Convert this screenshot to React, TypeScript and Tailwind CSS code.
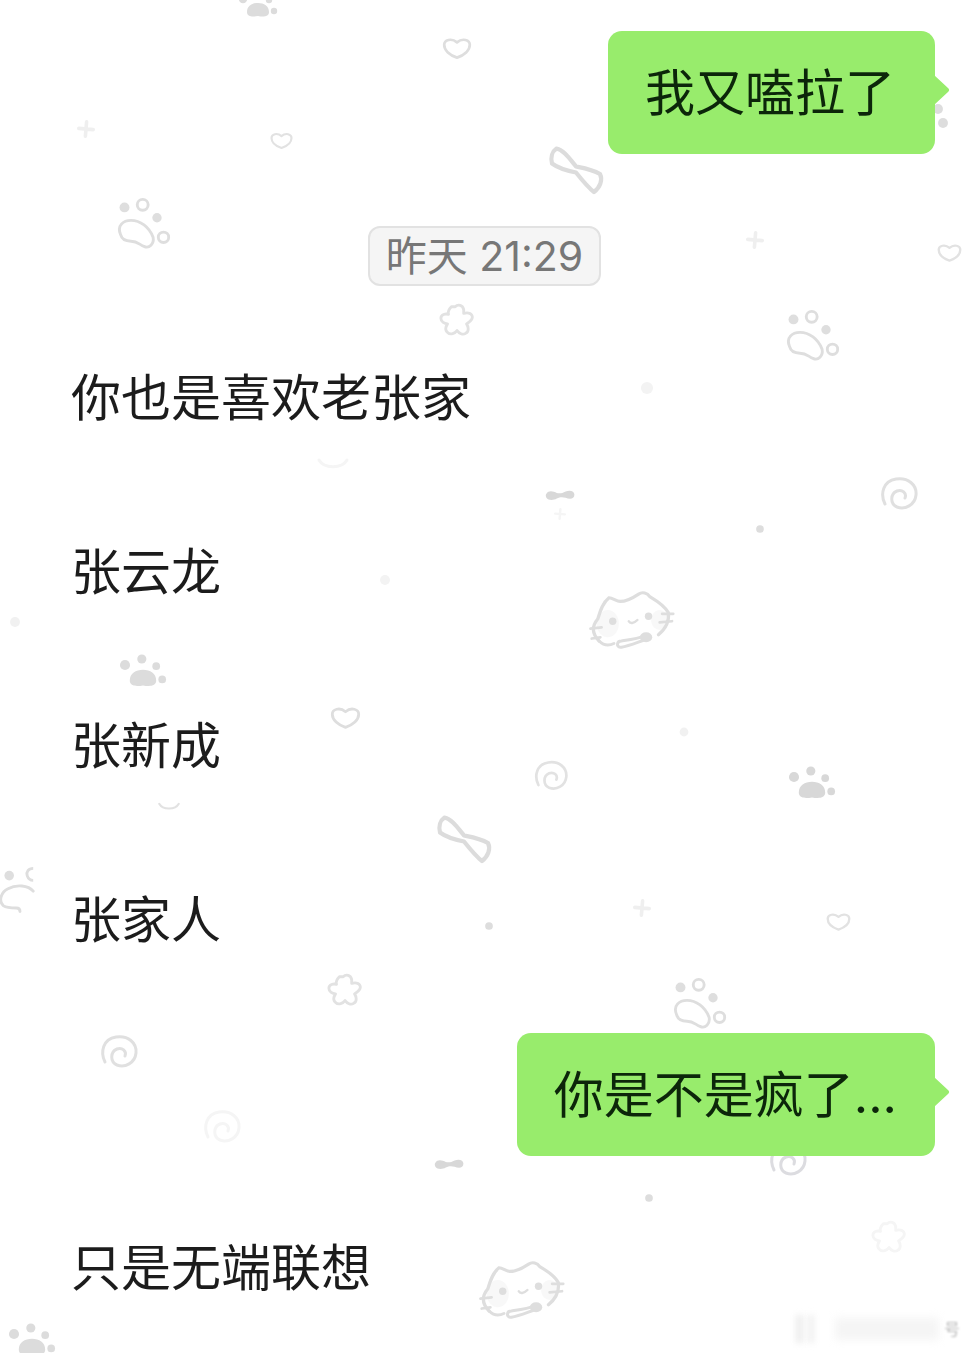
import React from 'react';

type DoodleKind = 'heart' | 'plus' | 'bow' | 'bone' | 'spiral' | 'flower' | 'smile' | 'dot' | 'pawLine' | 'pawCut' | 'pawSolid' | 'cat';

const Shape: React.FC<{ kind: DoodleKind }> = ({ kind }) => {
  switch (kind) {
    case 'heart':
      return <path d="M20 32C11 29 4 23 4 16c0-6 9-9 16-3 7-6 16-3 16 3 0 7-7 13-16 16z" fill="none" stroke="currentColor" strokeWidth="3.4" strokeLinejoin="round" />;
    case 'plus':
      return <path d="M21 8l-2 24M8 19l24 2" fill="none" stroke="currentColor" strokeWidth="6" strokeLinecap="round" />;
    case 'bow':
      return <path d="M7 5C12 6 16 12 20 17 25 18 31 19 36 22 38 26 36 31 32 34 28 31 24 26 20 21 15 20 8 18 4 15 3 11 4 7 7 5z" fill="none" stroke="currentColor" strokeWidth="2.8" strokeLinejoin="round" />;
    case 'bone':
      return <path d="M3 16c3-5 9-3 13-1 4 1 7 0 11-2 5-2 11-1 11 4 0 6-6 6-11 4-4-1-7-1-11 1-5 3-11 2-13-1-1-2-1-4 0-5z" fill="currentColor" />;
    case 'spiral':
      return <path d="M6 30C1 20 4 7 17 5 29 3 38 11 37 21 36 31 26 36 18 33 11 30 11 20 18 17 23 15 28 19 26 24" fill="none" stroke="currentColor" strokeWidth="3" strokeLinecap="round" />;
    case 'flower':
      return <path d="M17 5c3-3 8-2 9 3 0 2 0 3 0 4 3-1 8-1 9 3 1 4-3 6-6 8 2 3 3 8-1 10-3 2-7 0-9-3-2 3-7 5-10 2-3-2-2-6 0-9-3 0-7-2-7-6 0-4 5-5 8-4-1-3 1-6 3-8z" fill="none" stroke="currentColor" strokeWidth="3" strokeLinejoin="round" />;
    case 'smile':
      return <path d="M6 14c5 9 23 9 28 0" fill="none" stroke="currentColor" strokeWidth="3" strokeLinecap="round" />;
    case 'dot':
      return <circle cx="20" cy="20" r="11" fill="currentColor" />;
    case 'pawLine':
      return (
        <g>
          <path d="M2 29C-1 22 4 18 10 18 17 18 24 23 27 31 28 36 24 40 20 38 17 37 15 34 10 34 6 34 3 33 2 29z" fill="#fff" stroke="currentColor" strokeWidth="2.2" />
          <circle cx="5" cy="8" r="3.8" fill="currentColor" />
          <circle cx="19" cy="6" r="4.2" fill="#fff" stroke="currentColor" strokeWidth="2.2" />
          <circle cx="30" cy="16" r="3.6" fill="currentColor" />
          <circle cx="35" cy="31" r="4" fill="#fff" stroke="currentColor" strokeWidth="2.2" />
        </g>
      );
    case 'pawCut':
      return (
        <g>
          <circle cx="11" cy="8" r="4" fill="currentColor" />
          <path d="M31 2c-4 0-6 3-5 6 1 3 3 4 5 4" fill="none" stroke="currentColor" strokeWidth="2.4" />
          <path d="M31 21c-4-5-14-6-21-2-6 3-8 10-4 14 3 2 7 2 11 2 2 0 3 1 3 3" fill="none" stroke="currentColor" strokeWidth="2.4" strokeLinecap="round" />
        </g>
      );
    case 'pawSolid':
      return (
        <g fill="currentColor">
          <path d="M9 28c0-6 5-9 11-9s11 3 11 9c0 5-6 5-11 4-5 1-11 1-11-4z" />
          <circle cx="5" cy="15" r="4.2" />
          <circle cx="19" cy="10" r="3.8" />
          <circle cx="31" cy="16" r="3.2" />
          <circle cx="36" cy="27" r="3.2" />
        </g>
      );
    case 'cat':
      return (
        <g>
          <ellipse cx="16" cy="30" rx="9" ry="11" fill="currentColor" opacity="0.22" />
          <ellipse cx="58" cy="27" rx="7" ry="8" fill="currentColor" opacity="0.22" />
          <path d="M9 44C3 38 3 32 8 26 10 19 12 13 17 9 20 9 23 12 26 12 32 12 38 8 41 6 44 4 48 5 50 8 55 11 62 15 65 21 66 28 63 34 57 39" fill="none" stroke="currentColor" strokeWidth="2.6" strokeLinecap="round" />
          <path d="M9 44C13 48 17 48 21 46M26 49C23 49 23 44 27 44 33 43 40 42 46 40M27 49C33 48 40 45 46 43" fill="none" stroke="currentColor" strokeWidth="2.4" strokeLinecap="round" />
          <ellipse cx="47" cy="41" rx="5" ry="4" fill="currentColor" />
          <path d="M60 22h9M58 29l10-1M2 34l9-1M3 42l7-1" fill="none" stroke="currentColor" strokeWidth="2.2" strokeLinecap="round" />
          <circle cx="20" cy="28" r="3" fill="currentColor" />
          <circle cx="49" cy="24" r="3" fill="currentColor" />
          <path d="M33 28c1 2 4 2 7-1" fill="none" stroke="currentColor" strokeWidth="2" strokeLinecap="round" />
        </g>
      );
  }
};

const doodles: { kind: DoodleKind; x: number; y: number; size: number; tone: string }[] = [
  { kind: 'pawSolid', x: 258, y: 4, size: 40, tone: 'text-[#dcdcdc]' },
  { kind: 'heart', x: 457, y: 48, size: 32, tone: 'text-[#dedede]' },
  { kind: 'plus', x: 86, y: 129, size: 24, tone: 'text-[#efefef]' },
  { kind: 'heart', x: 281, y: 140, size: 25, tone: 'text-[#e2e2e2]' },
  { kind: 'bow', x: 576, y: 171, size: 60, tone: 'text-[#dcdcdc]' },
  { kind: 'dot', x: 938, y: 109, size: 18, tone: 'text-[#dddddd]' },
  { kind: 'dot', x: 943, y: 123, size: 18, tone: 'text-[#dddddd]' },
  { kind: 'pawLine', x: 144, y: 223, size: 52, tone: 'text-[#dedede]' },
  { kind: 'plus', x: 755, y: 240, size: 24, tone: 'text-[#efefef]' },
  { kind: 'heart', x: 949, y: 252, size: 27, tone: 'text-[#e2e2e2]' },
  { kind: 'flower', x: 458, y: 321, size: 38, tone: 'text-[#e2e2e2]' },
  { kind: 'pawLine', x: 813, y: 335, size: 52, tone: 'text-[#dedede]' },
  { kind: 'dot', x: 647, y: 388, size: 22, tone: 'text-[#f3f3f3]' },
  { kind: 'smile', x: 333, y: 466, size: 40, tone: 'text-[#f5f5f5]' },
  { kind: 'bone', x: 560, y: 497, size: 32, tone: 'text-[#d8d8d8]' },
  { kind: 'plus', x: 560, y: 514, size: 16, tone: 'text-[#f5f5f5]' },
  { kind: 'spiral', x: 899, y: 494, size: 40, tone: 'text-[#e0e0e0]' },
  { kind: 'dot', x: 760, y: 529, size: 14, tone: 'text-[#dddddd]' },
  { kind: 'dot', x: 385, y: 580, size: 18, tone: 'text-[#f3f3f3]' },
  { kind: 'cat', x: 630, y: 620, size: 84, tone: 'text-[#dedede]' },
  { kind: 'dot', x: 15, y: 622, size: 18, tone: 'text-[#f1f1f1]' },
  { kind: 'pawSolid', x: 143, y: 671, size: 48, tone: 'text-[#dcdcdc]' },
  { kind: 'heart', x: 345, y: 717, size: 33, tone: 'text-[#dedede]' },
  { kind: 'dot', x: 684, y: 732, size: 16, tone: 'text-[#f1f1f1]' },
  { kind: 'spiral', x: 551, y: 776, size: 36, tone: 'text-[#e2e2e2]' },
  { kind: 'pawSolid', x: 812, y: 783, size: 48, tone: 'text-[#d8d8d8]' },
  { kind: 'smile', x: 169, y: 808, size: 28, tone: 'text-[#e2e2e2]' },
  { kind: 'bow', x: 464, y: 840, size: 60, tone: 'text-[#dcdcdc]' },
  { kind: 'pawCut', x: 20, y: 890, size: 48, tone: 'text-[#dedede]' },
  { kind: 'dot', x: 489, y: 926, size: 14, tone: 'text-[#dddddd]' },
  { kind: 'plus', x: 642, y: 908, size: 24, tone: 'text-[#efefef]' },
  { kind: 'heart', x: 838, y: 921, size: 27, tone: 'text-[#e2e2e2]' },
  { kind: 'flower', x: 346, y: 991, size: 38, tone: 'text-[#e2e2e2]' },
  { kind: 'pawLine', x: 700, y: 1003, size: 52, tone: 'text-[#dedede]' },
  { kind: 'spiral', x: 119, y: 1052, size: 40, tone: 'text-[#e0e0e0]' },
  { kind: 'spiral', x: 222, y: 1127, size: 40, tone: 'text-[#f5f5f5]' },
  { kind: 'bone', x: 449, y: 1166, size: 32, tone: 'text-[#d8d8d8]' },
  { kind: 'spiral', x: 788, y: 1160, size: 40, tone: 'text-[#dcdce0]' },
  { kind: 'dot', x: 649, y: 1198, size: 14, tone: 'text-[#dddddd]' },
  { kind: 'flower', x: 890, y: 1238, size: 38, tone: 'text-[#f5f5f5]' },
  { kind: 'cat', x: 520, y: 1290, size: 84, tone: 'text-[#dedede]' },
  { kind: 'pawSolid', x: 32, y: 1340, size: 48, tone: 'text-[#dcdcdc]' },
];

const Bubble: React.FC<{ children: React.ReactNode; className: string }> = ({ children, className }) => (
  <div className={`relative self-end mr-[34px] h-[123px] flex items-center bg-[#98ec6c] rounded-[14px] text-[50px] leading-none text-[#0c260a] whitespace-nowrap ${className}`}>
    {children}
    <svg viewBox="0 0 16 30" className="absolute top-[44px] -right-[15px] w-[16px] h-[30px]">
      <path d="M0 0 14 13c1.500 1 1.500 3 0 4L0 30z" fill="#98ec6c" />
    </svg>
  </div>
);

const Line: React.FC<{ text: string; className: string }> = ({ text, className }) => (
  <div className={`ml-[71px] h-[70px] flex items-center text-[50px] leading-none text-[#1c1c1c] ${className}`}>{text}</div>
);

const App: React.FC = () => {
  return (
    <div className="relative w-[969px] h-[1353px] overflow-hidden bg-white font-['Inter','Noto_Sans_CJK_SC',sans-serif]">
      {/* chat wallpaper */}
      {doodles.map((d, i) => (
        <svg
          key={i}
          viewBox={d.kind === 'cat' ? '0 0 68 54' : '0 0 40 40'}
          width={d.size}
          height={d.size}
          className={`absolute overflow-visible ${d.tone}`}
          style={{ left: d.x - d.size / 2, top: d.y - d.size / 2 }}
        >
          <Shape kind={d.kind} />
        </svg>
      ))}

      {/* blurred watermark */}
      <div className="absolute left-[796px] top-[1314px] w-[164px] h-[30px] flex items-center gap-[5px]">
        <span className="w-[7px] h-[28px] blur-[3px] bg-[#ececec]" />
        <span className="w-[6px] h-[28px] blur-[3px] bg-[#efefef]" />
        <span className="flex-1 h-[22px] ml-[16px] blur-[4px] bg-[#f5f5f5]" />
        <span className="text-[16px] leading-none text-[#b5b5b5] blur-[1px]">号</span>
      </div>

      <div className="relative flex flex-col">
        <Bubble className="mt-[31px] pl-[37px] pr-[40px]">我又嗑拉了</Bubble>

        <div className="self-center mt-[72px] h-[60px] w-[233px] flex items-center justify-center bg-[#f5f5f5] border-2 border-[#e2e2e2] rounded-[12px] text-[41px] leading-none text-[#777777] whitespace-nowrap">
          昨天 21:29
        </div>

        <Line text="你也是喜欢老张家" className="mt-[77px]" />
        <Line text="张云龙" className="mt-[104px]" />
        <Line text="张新成" className="mt-[104px]" />
        <Line text="张家人" className="mt-[104px]" />

        <Bubble className="mt-[78px] pl-[37px] pr-[38px]">你是不是疯了...</Bubble>

        <Line text="只是无端联想" className="mt-[77px]" />
      </div>
    </div>
  );
};

export default App;
